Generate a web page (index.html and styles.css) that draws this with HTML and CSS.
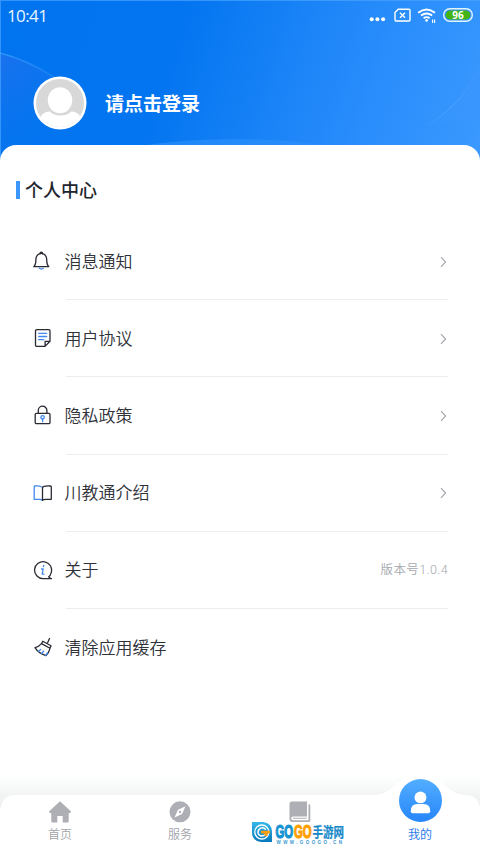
FILE: index.html
```html
<!DOCTYPE html>
<html lang="zh-CN">
<head>
<meta charset="utf-8">
<title>个人中心</title>
<link rel="stylesheet" href="styles.css">
</head>
<body>
<div class="app">
  <header class="hero">
    <svg class="hero-art" viewBox="0 0 480 160" preserveAspectRatio="none">
      <defs>
        <linearGradient id="arc" x1="0" y1="0" x2="1" y2="1"><stop offset="0" stop-color="#2470ee" stop-opacity=".75"/><stop offset=".7" stop-color="#087af0" stop-opacity="0"/></linearGradient>
        <linearGradient id="line" x1="0" x2="1"><stop offset="0" stop-color="#2b96fb"/><stop offset=".7" stop-color="#2b96fb" stop-opacity="0"/></linearGradient>
        <linearGradient id="edge" x1="1" y1="0" x2="0" y2="1"><stop offset="0" stop-color="#5b9cff" stop-opacity=".1"/><stop offset=".6" stop-color="#6bb4ff" stop-opacity=".5"/><stop offset="1" stop-color="#6bb4ff" stop-opacity=".1"/></linearGradient>
      </defs>
      <path d="M0 53Q35 61 64 84Q108 104 140 160H0Z" fill="url(#arc)"/>
      <path d="M0 53Q28 60 55 78Q97 100 130 140" fill="none" stroke="url(#line)" stroke-width="1.3"/>
      <path d="M480 66Q462 106 426 126Q466 118 480 118Z" fill="#4295ff" opacity=".2"/>
      <path d="M480 66Q462 106 426 126" fill="none" stroke="url(#edge)"/>
      <path d="M140 146Q230 132 330 146Z" fill="#2b90fb" opacity=".65"/>
      <path d="M0 0H480V1H0ZM0 0H1V160H0Z" fill="#48a4ff" opacity=".7"/>
    </svg>
    <div class="status">
      <span class="clock">10:41</span>
      <svg class="status-icons" width="106" height="20" viewBox="368 5 106 20" fill="none" stroke="#fff">
        <g fill="#fff" stroke="none"><circle cx="371.7" cy="18.200" r="2"/><circle cx="377.4" cy="18.200" r="2"/><circle cx="383.1" cy="18.200" r="2"/></g>
        <path d="M398.200 8.300H409a1 1 0 0 1 1 1V19a1 1 0 0 1-1 1H396a1 1 0 0 1-1-1V11.500Z" stroke-width="1.4"/>
        <path d="M400 11.700l5 5m0-5l-5 5" stroke-width="1.4"/>
        <g stroke-width="1.9"><path d="M418.2 11.700q8.400-6.600 16.800 0"/><path d="M421 14.600q5.600-4.200 11.200 0"/><path d="M423.600 17.200q3-2.200 6 0"/></g>
        <circle cx="426.6" cy="19.400" r="1.300" fill="#fff" stroke="none"/>
        <path d="M432.600 18.500v3.400M434.600 18.500v3.400" stroke-width="1.1"/>
        <rect x="443.700" y="7.800" width="28.600" height="12.400" rx="6.200" stroke-width="1.4" stroke="#e4f5ff"/>
        <rect x="445.600" y="9.600" width="24.800" height="8.800" rx="4.400" fill="#43b414" stroke="none"/>
        <text x="458" y="17.700" text-anchor="middle" class="battery">96</text>
      </svg>
    </div>
    <div class="profile">
      <svg class="avatar" width="54" height="54" viewBox="0 0 54 54">
        <defs><clipPath id="face"><circle cx="27" cy="27" r="24"/></clipPath></defs>
        <circle cx="27" cy="27" r="26.500" fill="#fff"/>
        <circle cx="27" cy="27" r="24" fill="#d8d8d8"/>
        <path clip-path="url(#face)" d="M0 54L8 40Q11 35.500 17 35.500Q20 39.500 27.500 39.500Q35 39.500 38 35.500Q44 35.500 47 40L54 54Z" fill="#fff"/>
        <ellipse cx="27" cy="24.300" rx="12.200" ry="13" fill="#fff"/>
      </svg>
      <span class="login">请点击登录</span>
    </div>
  </header>
  <main class="sheet">
    <h1 class="heading"><span>个人中心</span></h1>
    <ul class="menu">
      <li class="item">
        <svg class="icon bell" viewBox="0 0 20 20"><path d="M8 3.200V2.500a1.300 1.300 0 0 1 2.600 0v.7M1.800 15.700c2.500-1.900 1.800-4.700 2.200-8a5.300 5.300 0 0 1 10.600 0c.4 3.300-.3 6.100 2.200 8Z"/><path class="blue" d="M7.300 17.300q2 1.400 4 0"/></svg>
        <span class="row"><span>消息通知</span><svg class="chevron" viewBox="0 0 7 12"><path d="M1 1.200l4.600 4.800L1 10.800"/></svg></span>
      </li>
      <li class="item">
        <svg class="icon" viewBox="0 0 20 20"><path d="M4 1.700h12q1 0 1 1v10.500l-5 5.200H4q-1.500 0-1.500-1.500V3.200Q2.500 1.700 4 1.700ZM16.800 13.300h-4.700v4.700"/><path class="blue" d="M5.700 5.300h8M5.700 8.500h8M5.700 11.700h5"/></svg>
        <span class="row"><span>用户协议</span><svg class="chevron" viewBox="0 0 7 12"><path d="M1 1.200l4.600 4.800L1 10.800"/></svg></span>
      </li>
      <li class="item">
        <svg class="icon" viewBox="0 0 20 20"><rect x="2.200" y="8.300" width="14.800" height="10.300" rx="1.200"/><path d="M5.300 8V5.500a4.300 4.300 0 0 1 8.600 0V8"/><circle class="blue" cx="9.600" cy="12.300" r="1.700"/><path class="blue" d="M9.600 14v2.800"/></svg>
        <span class="row"><span>隐私政策</span><svg class="chevron" viewBox="0 0 7 12"><path d="M1 1.200l4.600 4.800L1 10.800"/></svg></span>
      </li>
      <li class="item">
        <svg class="icon" viewBox="0 0 20 20"><path class="blue" d="M9 4q-3.500-1.600-7-1Q1.200 3.200 1.200 4v12.300H7q1.500 0 2 1"/><path d="M9.500 17.300V5q0-1.200 1.500-1.600 3-.8 6.300-.4 1 .1 1 1v12.300H12.500q-2 0-3 1Z"/></svg>
        <span class="row"><span>川教通介绍</span><svg class="chevron" viewBox="0 0 7 12"><path d="M1 1.200l4.600 4.800L1 10.800"/></svg></span>
      </li>
      <li class="item">
        <svg class="icon" viewBox="0 0 20 20"><path d="M15.700 16.800q1.700-1 2.500-4.200A8.500 8.500 0 1 0 10 18.600h8.500q-1.800-.4-2.800-1.800Z"/><path class="blue" d="M10.700 5.300l-.2 1.200M8.500 9h1.700l-1 5.200h1.700"/></svg>
        <span class="row"><span>关于</span><span class="version">版本号1.0.4</span></span>
      </li>
      <li class="item">
        <svg class="icon" viewBox="0 0 20 20"><path d="M16.500 1.500l-1.800 4M9.800 4.200l8.200 4.500-1 2.600-8.500-4.700ZM8.500 6.600Q6 9.600 2 10.600q3.200 5.400 11 8 3-3 4-7.300"/><path class="blue" d="M5.500 14.300l2.200-1.800M8.600 16.500l2-2.200M12.700 18.300l1.700-2.500"/></svg>
        <span class="row"><span>清除应用缓存</span></span>
      </li>
    </ul>
  </main>
  <nav class="tabs">
    <svg class="tabs-bg" viewBox="0 0 480 80">
      <defs><linearGradient id="haze" x2="0" y2="1"><stop stop-color="#f3f5f5" stop-opacity="0"/><stop offset=".5" stop-color="#f3f5f4"/><stop offset="1" stop-color="#e9edec"/></linearGradient></defs>
      <path d="M0 2H480V40H0Z" fill="url(#haze)"/>
      <path d="M0 80V37Q2 22 16 22H374C394 22 394 3 420 3S446 22 466 22Q477 22 480 34V80Z" fill="#fff"/>
    </svg>
    <div class="tab">
      <svg class="glyph" viewBox="0 0 24 24"><path d="M12 1.300L23 11.500Q23 13 21.500 13H20.700V21.500Q20.700 22.500 19.700 22.500H14.700V16H9.300V22.500H4.300Q3.300 22.500 3.300 21.500V13H2.500Q1 13 1 11.500Z"/></svg>
      <span>首页</span>
    </div>
    <div class="tab">
      <svg class="glyph" viewBox="0 0 24 24"><path fill-rule="evenodd" d="M12 1.300a10.500 10.500 0 1 0 0 21a10.500 10.500 0 0 0 0-21ZM17.500 6.300L14 14L6.500 17.400L10 9.700ZM12 10.700a1.200 1.200 0 1 1 0 2.400a1.200 1.200 0 0 1 0-2.400Z"/></svg>
      <span>服务</span>
    </div>
    <div class="tab">
      <svg class="glyph" viewBox="0 0 24 24"><path d="M4 1.500H19V16.500H5.200Q3.200 16.500 3.200 18.300T5.200 20.300H20.500V4Q22.300 4 22.300 5.800V20.500Q22.300 22 20.800 22H4.500Q1.500 22 1.500 19V4Q1.500 1.500 4 1.500Z"/><path d="M5 18.300H18.500" stroke="#aeaeb5" stroke-width="1"/></svg>
    </div>
    <div class="tab active">
      <svg class="orb" viewBox="0 0 42 42"><defs><linearGradient id="orb" x2="0" y2="1"><stop stop-color="#52aeff"/><stop offset="1" stop-color="#2685fa"/></linearGradient></defs><circle cx="21" cy="21" r="21" fill="url(#orb)"/><circle cx="21" cy="18" r="5.800" fill="#fff"/><path d="M11.500 31.500Q11.500 24.500 18 24.500H24Q30.500 24.500 30.500 31.500Q30.500 33.500 28.500 33.500H13.500Q11.500 33.500 11.500 31.500Z" fill="#fff"/></svg>
      <span>我的</span>
    </div>
  </nav>
  <svg class="watermark" width="96" height="26" viewBox="0 0 96 26">
    <defs><linearGradient id="wb" x2="0" y2="1"><stop stop-color="#35b8e8"/><stop offset="1" stop-color="#0878bd"/></linearGradient><linearGradient id="wo" x2="0" y2="1"><stop stop-color="#ffc400"/><stop offset="1" stop-color="#ff8500"/></linearGradient></defs>
    <path d="M1 1H12Q21 2 21 11V21H10Q1 20 1 11Z" fill="url(#wb)"/>
    <circle cx="10.800" cy="11" r="7" fill="none" stroke="#fff" stroke-width="1.300"/>
    <path d="M15 8.500Q11 5 8 8.500Q5.500 12.500 9 14.500Q12 16 15 13" fill="none" stroke="#fff" stroke-width="1.500"/>
    <path d="M10 9.700H19V12.500H16.500V15H13.500V12.500H10Z" fill="#ff9d12"/>
    <g transform="translate(24.400 16.800) scale(.63 1)"><text class="brand" fill="#1593d1" stroke="#1593d1">GO</text></g>
    <g transform="translate(43 16.800) scale(.63 1)"><text class="brand" fill="#ffa000" stroke="#ffa000">GO</text></g>
    <g transform="translate(61.500 15.800) scale(.75 1)"><text class="brand-cn">手游网</text></g>
    <text class="brand-url" x="25.500" y="22.600">WWW.GOOGO.CN</text>
  </svg>
</div>
</body>
</html>
```
FILE: styles.css
```css
* { box-sizing: border-box; }
body { margin: 0; background: #fff; color: #30323a; font-family: Roboto, "Noto Sans CJK SC", sans-serif; }
.app { position: relative; display: flex; flex-direction: column; height: 853px; overflow: hidden; }
.hero { position: relative; flex: none; height: 160px; background: linear-gradient(108deg, #0073ee 0%, #0375f0 35%, #2389fa 68%, #3b99ff 100%); }
.hero-art { position: absolute; inset: 0; width: 100%; height: 100%; }
.status { position: relative; display: flex; justify-content: space-between; align-items: center; height: 30px; padding: 1px 6px 0 7px; color: #e9f5ff; }
.clock { font: 17px/20px "Open Sans", "Noto Sans", sans-serif; letter-spacing: -.600px; }
.battery { font: bold 10px "Open Sans", sans-serif; fill: #fff; stroke: none; }
.profile { position: relative; display: flex; align-items: center; gap: 18px; padding: 46px 0 0 33px; }
.avatar { flex: none; }
.login { padding-top: 3px; color: #fff; font-size: 19px; font-weight: 700; line-height: 26px; }
.sheet { position: relative; flex: 1; margin-top: -15px; padding: 30px 32px 0 16px; border-radius: 16px 16px 0 0; background: #fff; }
.heading { display: flex; align-items: center; gap: 5px; height: 30px; margin: 0; color: #22242d; font-size: 18px; font-weight: 500; line-height: 26px; }
.heading::before { content: ""; width: 4px; height: 18px; background: #3b97fc; }
.heading span { padding-top: 1px; }
.menu { margin: 18px 0 0; padding: 0 0 0 17px; list-style: none; }
.item { display: flex; align-items: center; gap: 13px; height: 77.200px; }
.icon { flex: none; width: 20px; height: 20px; margin-bottom: 1px; fill: none; stroke: #292b33; stroke-width: 1.300; stroke-linejoin: round; stroke-linecap: round; }
.bell { margin: 0 1px 1px -1px; }
.icon .blue { stroke: #4388ef; }
.row { display: flex; flex: 1; align-items: center; justify-content: space-between; height: 100%; font-size: 17px; font-weight: 350; line-height: 24px; background: linear-gradient(#ededef, #ededef) 0 100% / 100% 1px no-repeat; }
.row > span:first-child { margin-left: -1.500px; }
.item:last-child .row { background: none; }
.chevron { width: 7px; height: 12px; margin-right: 1px; fill: none; stroke: #a2a4aa; stroke-width: 1.100; }
.version { color: #a5a7ad; font-size: 12.500px; letter-spacing: .400px; }
.tabs { position: absolute; left: 0; right: 0; bottom: 0; display: grid; grid-template-columns: repeat(4, 1fr); height: 80px; }
.tabs-bg { position: absolute; inset: 0; width: 480px; height: 80px; }
.tab { position: relative; display: flex; flex-direction: column; align-items: center; padding-top: 27px; color: #a2a3a9; font-size: 12px; font-weight: 350; line-height: 16px; }
.glyph { width: 24px; height: 24px; margin-bottom: 3px; fill: #aeaeb5; }
.tab.active { padding-top: 6px; color: #2d7cec; font-weight: 400; }
.orb { width: 43px; height: 43px; margin-bottom: 5px; }
.watermark { position: absolute; left: 251px; top: 821px; overflow: visible; }
.brand { font: bold 18px "Liberation Sans", sans-serif; stroke-width: 1.200; }
.brand-cn { font: 700 14px "Noto Sans CJK SC", sans-serif; fill: #1688c9; stroke: #1688c9; stroke-width: .2; }
.brand-url { font: bold 4.500px "Liberation Sans", sans-serif; letter-spacing: 2.400px; fill: #3d98d0; }
```
